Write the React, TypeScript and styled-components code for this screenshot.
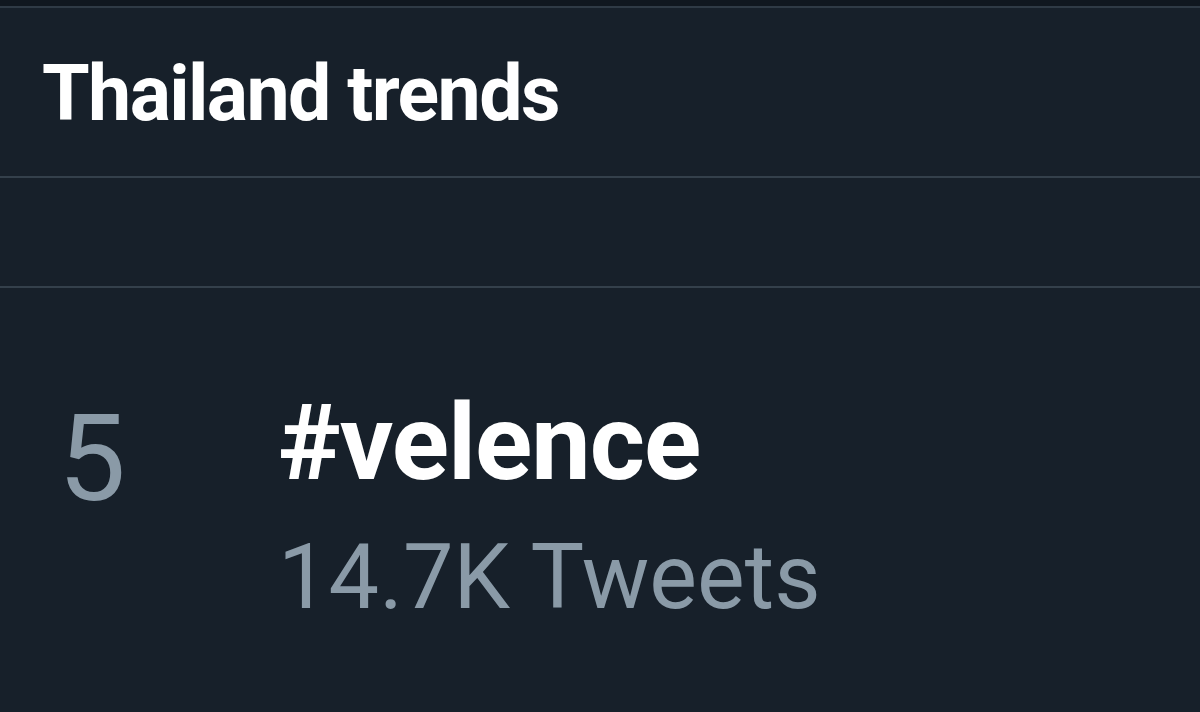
import * as React from "react";
import styled, { createGlobalStyle } from "styled-components";

const GlobalStyle = createGlobalStyle`
  html, body {
    margin: 0;
    padding: 0;
    background: #17202a;
  }
  body {
    font-family: Roboto, "Noto Sans", Arial, sans-serif;
    -webkit-font-smoothing: antialiased;
  }
`;

const SLayout = styled.div`
  width: 1200px;
  height: 712px;
  overflow: hidden;
  display: flex;
  flex-direction: column;
  background: #17202a;
`;

const STopStrip = styled.div`
  height: 6px;
  background: #10171f;
  border-bottom: 2px solid #2f3a45;
`;

const SHeader = styled.div`
  height: 168px;
  display: flex;
  align-items: center;
  padding: 0 42px;
  border-bottom: 2px solid #34404b;
`;

const STitle = styled.h2`
  margin: 0;
  margin-top: 4px;
  font-size: 77px;
  font-weight: 700;
  color: #ffffff;
  letter-spacing: -1.6px;
`;

const SGap = styled.div`
  height: 108px;
  border-bottom: 2px solid #34404b;
`;

const STrendRow = styled.div`
  display: flex;
  align-items: flex-start;
  padding-top: 102px;
`;

const SRank = styled.div`
  flex: 0 0 278px;
  padding-left: 58px;
  box-sizing: border-box;
  font-size: 121px;
  line-height: 1;
  margin-top: 9px;
  color: #8a9aa7;
`;

const STrendBody = styled.div`
  display: flex;
  flex-direction: column;
`;

const STrendName = styled.div`
  font-size: 106px;
  font-weight: 700;
  line-height: 1;
  color: #ffffff;
  letter-spacing: -1px;
`;

const STrendCount = styled.div`
  font-size: 90px;
  line-height: 1;
  margin-top: 37px;
  color: #8a9aa7;
`;

interface ITrend {
  rank: number;
  name: string;
  count: string;
}

const trend: ITrend = { rank: 5, name: "#velence", count: "14.7K Tweets" };

const App = () => (
  <SLayout>
    <GlobalStyle />
    <STopStrip />
    <SHeader>
      <STitle>{"Thailand trends"}</STitle>
    </SHeader>
    <SGap />
    <STrendRow>
      <SRank>{trend.rank}</SRank>
      <STrendBody>
        <STrendName>{trend.name}</STrendName>
        <STrendCount>{trend.count}</STrendCount>
      </STrendBody>
    </STrendRow>
  </SLayout>
);

export default App;
